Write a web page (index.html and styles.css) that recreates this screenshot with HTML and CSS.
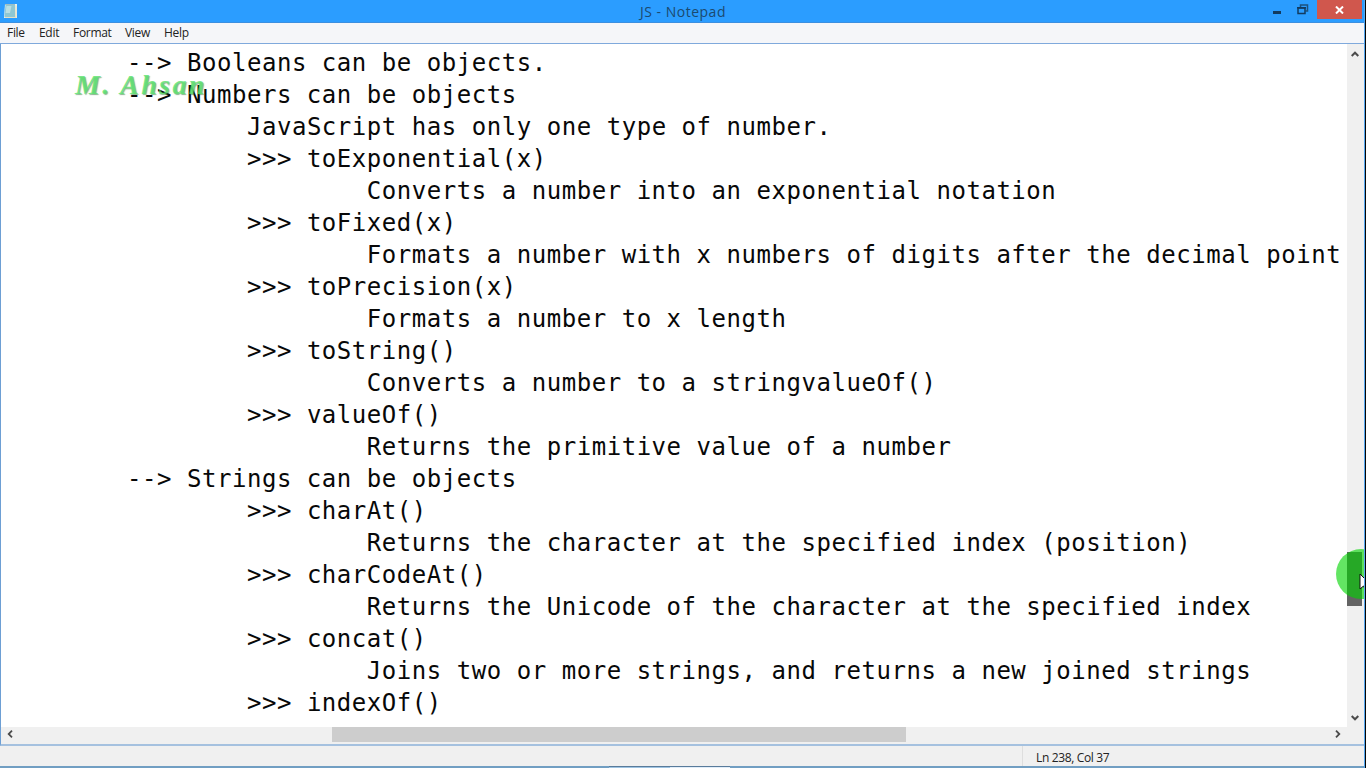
FILE: index.html
```html
<!DOCTYPE html>
<html lang="en">
<head>
<meta charset="utf-8">
<title>JS - Notepad</title>
<link rel="stylesheet" href="styles.css">
</head>
<body>
<div class="window">
  <header class="titlebar">
    <svg class="app-icon" width="16" height="18" viewBox="0 0 16 18">
      <path d="M2 2h12v14H1z" fill="#e8f3f0"/>
      <path d="M2.500 3h9.500v12H1.500z" fill="#8fc7d3"/>
      <path d="M3.500 4h5L7 11H2.500z" fill="#b9dfe3"/>
      <path d="M12.500 3l1 1v12H2v-1h10z" fill="#e6dfc4"/>
      <path d="M2.500 2.500h10" stroke="#54899b" stroke-dasharray="1 1"/>
    </svg>
    <h1 class="title">JS - Notepad</h1>
    <div class="controls">
      <svg class="minimize" width="8" height="4"><path d="M0 0h8v3H0z" fill="#123b60"/></svg>
      <svg class="restore" width="12" height="11"><path d="M3.500 3V1h7v6H8.500" fill="none" stroke="#1d527f" stroke-width="1.500"/><path d="M1 4h7v5.500H1z" fill="none" stroke="#123b60" stroke-width="1.500"/><path d="M0 3h9v1.500H0z" fill="#123b60"/></svg>
      <div class="close"><svg width="9" height="8"><path d="M1 .5l7 7M8 .5l-7 7" stroke="#fff" stroke-width="2"/></svg></div>
    </div>
  </header>
  <nav class="menu"><span class="m-file">File</span><span class="m-edit">Edit</span><span class="m-format">Format</span><span class="m-view">View</span><span class="m-help">Help</span></nav>
  <main class="editor">
    <pre class="text">--&gt; Booleans can be objects.
--&gt; Numbers can be objects
	JavaScript has only one type of number.
	&gt;&gt;&gt; toExponential(x)
		Converts a number into an exponential notation
	&gt;&gt;&gt; toFixed(x)
		Formats a number with x numbers of digits after the decimal point
	&gt;&gt;&gt; toPrecision(x)
		Formats a number to x length
	&gt;&gt;&gt; toString()
		Converts a number to a stringvalueOf()
	&gt;&gt;&gt; valueOf()
		Returns the primitive value of a number
--&gt; Strings can be objects
	&gt;&gt;&gt; charAt()
		Returns the character at the specified index (position)
	&gt;&gt;&gt; charCodeAt()
		Returns the Unicode of the character at the specified index
	&gt;&gt;&gt; concat()
		Joins two or more strings, and returns a new joined strings
	&gt;&gt;&gt; indexOf()</pre>
    <div class="vscroll">
      <svg width="8" height="6"><path d="M.7 5L4 1.700 7.300 5" fill="none" stroke="#4b4b4b" stroke-width="2"/></svg>
      <div class="vthumb"></div>
      <svg width="8" height="6"><path d="M.7 1L4 4.300 7.300 1" fill="none" stroke="#4b4b4b" stroke-width="2"/></svg>
    </div>
  </main>
  <div class="hscroll">
    <svg width="6" height="8"><path d="M5 .7L1.700 4 5 7.300" fill="none" stroke="#4b4b4b" stroke-width="1.800"/></svg>
    <div class="hthumb"></div>
    <svg width="6" height="8"><path d="M1 .7L4.300 4 1 7.300" fill="none" stroke="#4b4b4b" stroke-width="1.800"/></svg>
  </div>
  <footer class="status"><span class="position">Ln 238, Col 37</span></footer>
  <div class="taskbar"><i class="task task-a"></i><i class="task task-b"></i></div>
  <div class="watermark">M. Ahsan</div>
  <div class="click-halo"></div>
  <svg class="cursor" width="6" height="20"><path d="M1 1v15l3.500-3L6 16V6z" fill="#fff" stroke="#111"/></svg>
  <div class="edge"></div>
</div>
</body>
</html>
```
FILE: styles.css
```css
* { box-sizing: border-box; }
body { margin: 0; }
.window {
  position: relative;
  width: 1366px;
  height: 768px;
  overflow: hidden;
  display: flex;
  flex-direction: column;
  background: #fff;
  font-family: "Open Sans", "Noto Sans", sans-serif;
  color: #222;
}
.titlebar {
  height: 23px;
  flex: none;
  display: grid;
  grid-template-columns: 120px 1fr 120px;
  background: #2b9dff;
  border-bottom: 1px solid #3c8fe0;
}
.app-icon { margin: 2px 0 0 3px; }
.title {
  margin: 0;
  font-size: 14px;
  font-weight: 400;
  line-height: 23px;
  letter-spacing: 0.5px;
  text-align: center;
  color: #1b4a70;
}
.controls { display: flex; }
.minimize { margin: 11px 0 0 27px; }
.restore { margin: 4px 0 0 16px; }
.close {
  width: 45px;
  height: 19px;
  margin-left: 8px;
  display: flex;
  align-items: center;
  justify-content: center;
  background: #d0574d;
}
.menu {
  height: 21px;
  flex: none;
  display: flex;
  padding-left: 7px;
  background: #f5f6f9;
  border-bottom: 1px solid #7fa9dc;
  font-size: 12px;
  line-height: 20px;
  letter-spacing: -0.3px;
}
.m-file { width: 32px; }
.m-edit { width: 34px; }
.m-format { width: 52px; }
.m-view { width: 39px; }
.editor {
  height: 683px;
  flex: none;
  display: flex;
  border-left: 1px solid #6d9fd4;
}
.text {
  flex: 1;
  margin: 0;
  padding: 3px 0 0 126px;
  overflow: hidden;
  font-family: "DejaVu Sans Mono", monospace;
  font-size: 24px;
  line-height: 32px;
  letter-spacing: 0.54px;
  tab-size: 8;
  color: #080808;
}
.vscroll {
  width: 19px;
  flex: none;
  display: flex;
  flex-direction: column;
  align-items: flex-start;
  background: #f0f0f0;
}
.vscroll svg { margin: 7px 0 0 4px; }
.vthumb {
  width: 15px;
  height: 54px;
  margin: 495px 0 102px;
  background: #636363;
}
.hscroll {
  height: 19px;
  flex: none;
  display: flex;
  border-left: 1px solid #6d9fd4;
  border-bottom: 2px solid #a5c1df;
  background: #f0f0f0;
}
.hscroll svg { margin: 3px 0 0 6px; }
.hthumb {
  width: 574px;
  height: 15px;
  margin: 0 423px 0 319px;
  background: #cdcdcd;
}
.status {
  height: 20px;
  flex: none;
  display: flex;
  padding-left: 1022px;
  background: #f0f0f0;
}
.position {
  padding-left: 13px;
  border-left: 1px solid #dedede;
  font-size: 12px;
  line-height: 23px;
  letter-spacing: -0.35px;
}
.taskbar {
  height: 2px;
  flex: none;
  display: flex;
  padding-left: 609px;
  background: #719ec2;
}
.task { height: 2px; border-top: 1px solid #597b9b; }
.task-a { width: 61px; background: #9fc4e2; }
.task-b { width: 60px; background: #e1edf8; }
.watermark {
  position: absolute;
  left: 75px;
  top: 69px;
  font: italic bold 28px/32px "Liberation Serif", serif;
  letter-spacing: 2.4px;
  color: rgba(95, 228, 112, 0.82);
  text-shadow: 1px 1px 1px rgba(55, 130, 65, 0.6);
  white-space: pre;
}
.click-halo {
  position: absolute;
  left: 1336px;
  top: 549px;
  width: 50px;
  height: 50px;
  border-radius: 50%;
  background: rgba(0, 212, 0, 0.61);
}
.cursor { position: absolute; left: 1359px; top: 573px; }
.edge {
  position: absolute;
  top: 0;
  right: 0;
  width: 2px;
  height: 768px;
  background: #060606;
  border-left: 1px solid #56a7f0;
}
```
